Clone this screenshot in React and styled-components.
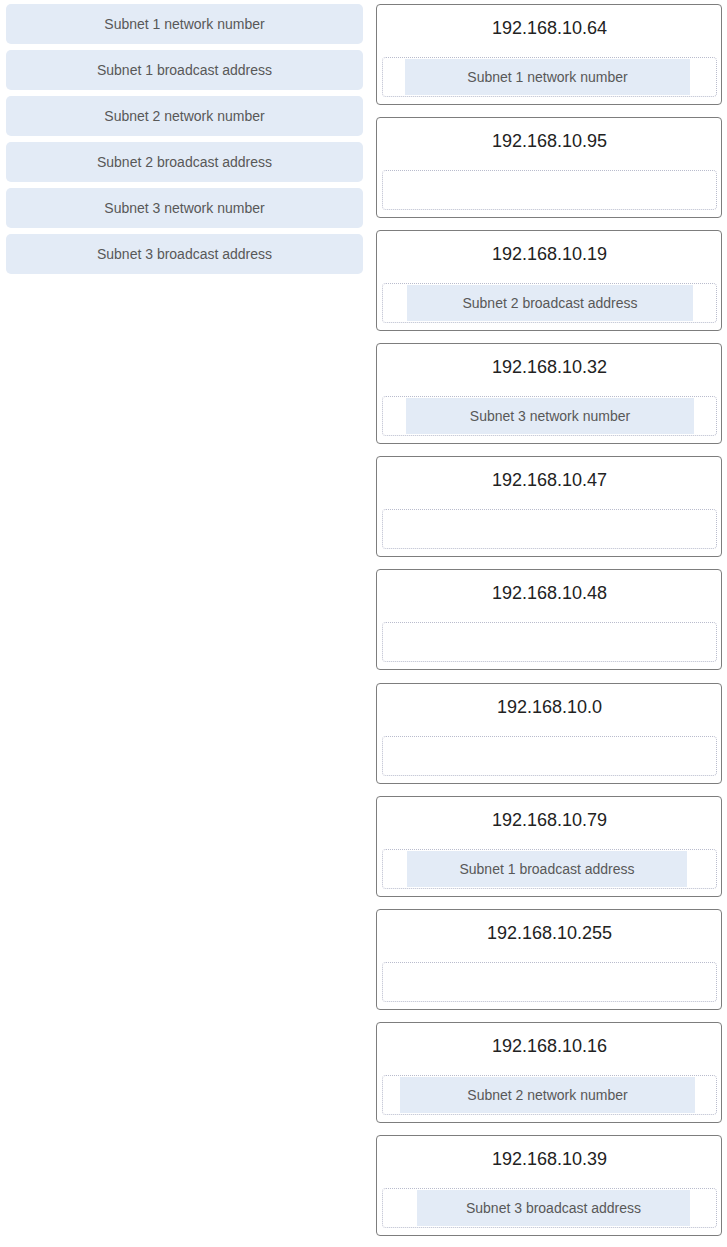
import styled, { createGlobalStyle } from "styled-components";

const GlobalStyle = createGlobalStyle`
  body {
    margin: 0;
    background: #fff;
    font-family: "Liberation Sans", Arial, sans-serif;
  }
`;

const Page = styled.div`
  display: grid;
  grid-template-columns: 357px 346px;
  column-gap: 13px;
  align-items: start;
  padding: 4px 0 0 6px;
`;

const Source = styled.div`
  display: flex;
  flex-direction: column;
  gap: 6px;
`;

const Chip = styled.div`
  height: 40px;
  border-radius: 5px;
  background: #e3ebf6;
  color: #585858;
  font-size: 14px;
  display: flex;
  align-items: center;
  justify-content: center;
`;

const Targets = styled.div`
  display: flex;
  flex-direction: column;
  gap: 12.1px;
`;

const Card = styled.div`
  box-sizing: border-box;
  height: 101px;
  border: 1px solid #7d7d7d;
  border-radius: 4px;
  padding: 13px 4px 0 5px;
  display: flex;
  flex-direction: column;
`;

const Address = styled.div`
  line-height: 20px;
  font-size: 18px;
  color: #222;
  text-align: center;
  margin-bottom: 19px;
`;

const DropZone = styled.div`
  box-sizing: border-box;
  height: 40px;
  border: 1px dotted #b9bccd;
  border-radius: 4px;
  padding: 1px 0;
  display: flex;
`;

const Placed = styled.div`
  flex: 1;
  margin: 0 ${p => p.$right}px 0 ${p => p.$left}px;
  background: #e3ebf6;
  color: #585858;
  font-size: 14px;
  display: flex;
  align-items: center;
  justify-content: center;
`;

const chips = [
  "Subnet 1 network number",
  "Subnet 1 broadcast address",
  "Subnet 2 network number",
  "Subnet 2 broadcast address",
  "Subnet 3 network number",
  "Subnet 3 broadcast address",
];

const targets = [
  { ip: "192.168.10.64", item: "Subnet 1 network number", left: 22, right: 26 },
  { ip: "192.168.10.95" },
  { ip: "192.168.10.19", item: "Subnet 2 broadcast address", left: 24, right: 23 },
  { ip: "192.168.10.32", item: "Subnet 3 network number", left: 23, right: 22 },
  { ip: "192.168.10.47" },
  { ip: "192.168.10.48" },
  { ip: "192.168.10.0" },
  { ip: "192.168.10.79", item: "Subnet 1 broadcast address", left: 24, right: 29 },
  { ip: "192.168.10.255" },
  { ip: "192.168.10.16", item: "Subnet 2 network number", left: 17, right: 21 },
  { ip: "192.168.10.39", item: "Subnet 3 broadcast address", left: 34, right: 26 },
];

export default function App() {
  return (
    <>
      <GlobalStyle />
      <Page>
        <Source>
          {chips.map(c => (
            <Chip key={c}>{c}</Chip>
          ))}
        </Source>
        <Targets>
          {targets.map(t => (
            <Card key={t.ip}>
              <Address>{t.ip}</Address>
              <DropZone>
                {t.item && (
                  <Placed $left={t.left} $right={t.right}>{t.item}</Placed>
                )}
              </DropZone>
            </Card>
          ))}
        </Targets>
      </Page>
    </>
  );
}
